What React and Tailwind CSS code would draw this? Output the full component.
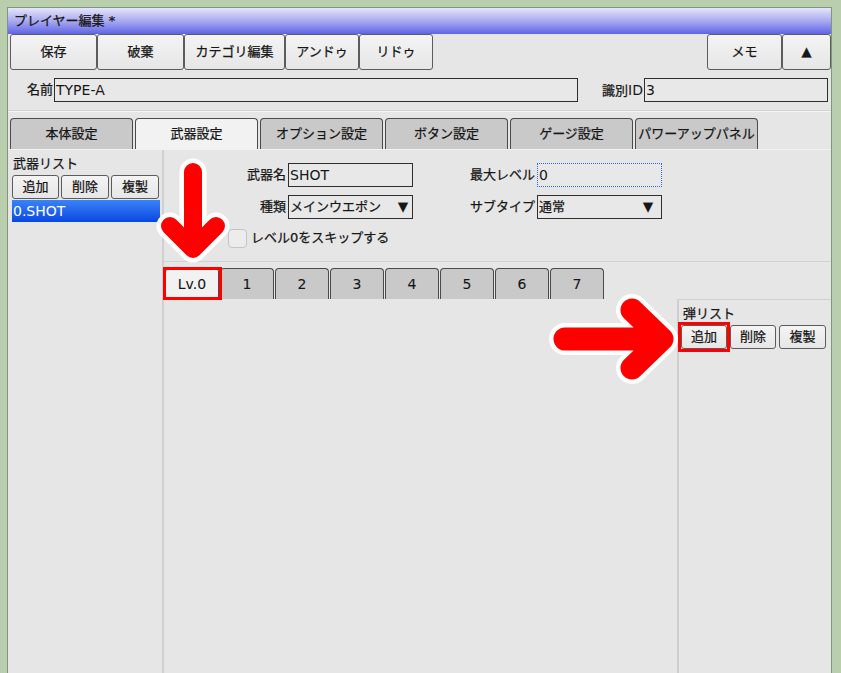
import React from "react"

function Btn({ label, className = "" }) {
  return (
    <div className={"flex items-center justify-center border border-[#5c5c5c] rounded-[3px] bg-gradient-to-b from-[#f4f4f4] to-[#e6e6e6] " + className}>
      {label}
    </div>
  )
}

function Tab({ label, active }) {
  return (
    <div
      className={
        "w-[123px] h-[31px] flex items-center justify-center border border-b-0 border-[#4a4a4a] rounded-t-[4px] whitespace-nowrap overflow-hidden " +
        (active ? "bg-[#f2f2f2]" : "bg-[#c9c9c9]")
      }
    >
      {label}
    </div>
  )
}

function LvTab({ label, active }) {
  return (
    <div
      className={
        "w-[54px] h-[31px] flex items-center justify-center border border-b-0 border-[#4a4a4a] rounded-t-[4px] text-[14px] [-webkit-text-stroke:0.1px_#161616] " +
        (active ? "bg-[#f2f2f2]" : "bg-[#c9c9c9]")
      }
    >
      {label}
    </div>
  )
}

function Field({ children, className = "" }) {
  return (
    <div className={"h-[24px] flex items-center bg-[#e8e8e8] border border-[#2e2e2e] pl-[1px] " + className}>
      {children}
    </div>
  )
}

// latin text stays regular weight, the cjk text gets a light stroke
const latin = "text-[14px] [-webkit-text-stroke:0px]"

export default function App() {
  const font = "font-['DejaVu_Sans','Noto_Sans_CJK_JP',sans-serif]"
  return (
    <div className={"relative w-[841px] h-[673px] overflow-hidden bg-[#b9ceac] pl-[7px] pr-[9px] pt-[7px] text-[13px] text-[#161616] [-webkit-text-stroke:0.25px_#161616] " + font}>
      <div className="h-full bg-[#e6e6e6] border-l border-t border-r border-[#80967a] flex flex-col">
        {/* title */}
        <div className="h-[26px] shrink-0 flex items-center px-[6px] bg-gradient-to-b from-[#e6e6fa] via-[#a9a9f0] to-[#6262e4]">
          プレイヤー編集 *
        </div>

        {/* toolbar */}
        <div className="h-[36px] shrink-0 flex pl-[2px]">
          <Btn label="保存" className="w-[87px]" />
          <Btn label="破棄" className="w-[87px]" />
          <Btn label="カテゴリ編集" className="w-[101px]" />
          <Btn label="アンドゥ" className="w-[74px]" />
          <Btn label="リドゥ" className="w-[74px]" />
          <div className="flex-1" />
          <Btn label="メモ" className="w-[75px]" />
          <Btn label="▲" className="w-[49px]" />
        </div>

        {/* name row */}
        <div className="h-[22px] mt-[9px] shrink-0 flex items-center">
          <div className="w-[46px] text-right pr-[1px]">名前</div>
          <Field className={"w-[524px] h-[22px] " + latin}>TYPE-A</Field>
          <div className="w-[66px] text-right pr-[1px]">識別<span className={latin}>ID</span></div>
          <Field className={"w-[184px] h-[22px] " + latin}>3</Field>
        </div>

        <div className="mt-[9px] shrink-0 border-t border-[#d2d2d2]" />
        <div className="shrink-0 border-t border-[#f6f6f6]" />

        {/* tabs */}
        <div className="mt-[6px] shrink-0 flex gap-[2px] pl-[2px]">
          <Tab label="本体設定" />
          <Tab label="武器設定" active />
          <Tab label="オプション設定" />
          <Tab label="ボタン設定" />
          <Tab label="ゲージ設定" />
          <Tab label="パワーアップパネル" />
        </div>

        {/* content */}
        <div className="flex-1 flex border-t border-[#f2f2f2]">
          {/* weapon list */}
          <div className="w-[154px] pl-[4px] flex flex-col">
            <div className="h-[25px] flex items-center pl-[1px] pt-[2px]">武器リスト</div>
            <div className="flex gap-[2px] h-[24px]">
              <Btn label="追加" className="w-[47px]" />
              <Btn label="削除" className="w-[48px]" />
              <Btn label="複製" className="w-[48px]" />
            </div>
            <div className={"mt-[1px] w-[148px] h-[22px] flex items-center pl-[1px] text-white bg-gradient-to-b from-[#3c82f8] to-[#0847df] " + latin}>
              0.SHOT
            </div>
          </div>

          <div className="w-[2px] bg-[#d0d0d0]" />

          {/* weapon editor */}
          <div className="flex-1 flex flex-col">
            <div className="h-[112px] border-b border-[#d2d2d2] pt-[13px] flex flex-col">
              <div className="flex items-center h-[24px]">
                <div className="w-[124px] text-right pr-[2px]">武器名</div>
                <Field className={"w-[125px] " + latin}>SHOT</Field>
                <div className="w-[124px] text-right pr-[2px]">最大レベル</div>
                <div className={"w-[125px] h-[24px] flex items-center pl-[1px] border border-dotted border-[#2c66d8] bg-[#e8e8e8] " + latin}>0</div>
              </div>
              <div className="flex items-center h-[24px] mt-[8px]">
                <div className="w-[124px] text-right pr-[2px]">種類</div>
                <Field className="w-[125px] pr-[4px]">
                  <span>メインウエポン</span>
                  <span className="ml-auto">▼</span>
                </Field>
                <div className="w-[124px] text-right pr-[2px]">サブタイプ</div>
                <Field className="w-[125px] pr-[8px]">
                  <span>通常</span>
                  <span className="ml-auto">▼</span>
                </Field>
              </div>
              <div className="flex items-center h-[20px] mt-[9px] pl-[64px]">
                <div className="w-[19px] h-[19px] rounded-[4px] border border-[#c4c4c4] bg-[#ececec]" />
                <div className="ml-[4px]">レベル0をスキップする</div>
              </div>
            </div>

            {/* level tabs */}
            <div className="mt-[6px] flex gap-[1px] pl-[1px]">
              <div className="relative">
                <LvTab label="Lv.0" active />
                <div className="absolute -left-[2px] -right-[3px] -top-[1px] -bottom-[1px] border-[3px] border-[#ff0000]" />
              </div>
              <LvTab label="1" />
              <LvTab label="2" />
              <LvTab label="3" />
              <LvTab label="4" />
              <LvTab label="5" />
              <LvTab label="6" />
              <LvTab label="7" />
            </div>

            <div className="flex-1 flex">
              <div className="flex-1" />
              <div className="w-[154px] border-l-2 border-t border-[#cfcfcf] flex flex-col pl-[2px]">
                <div className="h-[25px] flex items-center pl-[2px] pt-[2px]">弾リスト</div>
                <div className="flex gap-[3px] h-[24px]">
                  <div className="relative">
                    <Btn label="追加" className="w-[46px] h-[24px]" />
                    <div className="absolute -inset-[3px] border-[3px] border-[#ff0000]" />
                  </div>
                  <Btn label="削除" className="w-[46px]" />
                  <Btn label="複製" className="w-[47px]" />
                </div>
              </div>
            </div>
          </div>
        </div>
      </div>

      {/* annotation arrows */}
      <svg className="absolute inset-0 pointer-events-none" width="841" height="673">
        <g fill="none" strokeLinecap="round" strokeLinejoin="round">
          <path d="M193 172 L193 248 M170 226 L193 249 L216 226" stroke="#ffffff" strokeWidth="27" />
          <path d="M193 172 L193 248 M170 226 L193 249 L216 226" stroke="#ff0000" strokeWidth="18" />
          <path d="M565 339 L661 339 M632 310 L662 339 L632 368" stroke="#ffffff" strokeWidth="32" />
          <path d="M565 339 L661 339 M632 310 L662 339 L632 368" stroke="#ff0000" strokeWidth="23" />
        </g>
      </svg>
    </div>
  )
}
